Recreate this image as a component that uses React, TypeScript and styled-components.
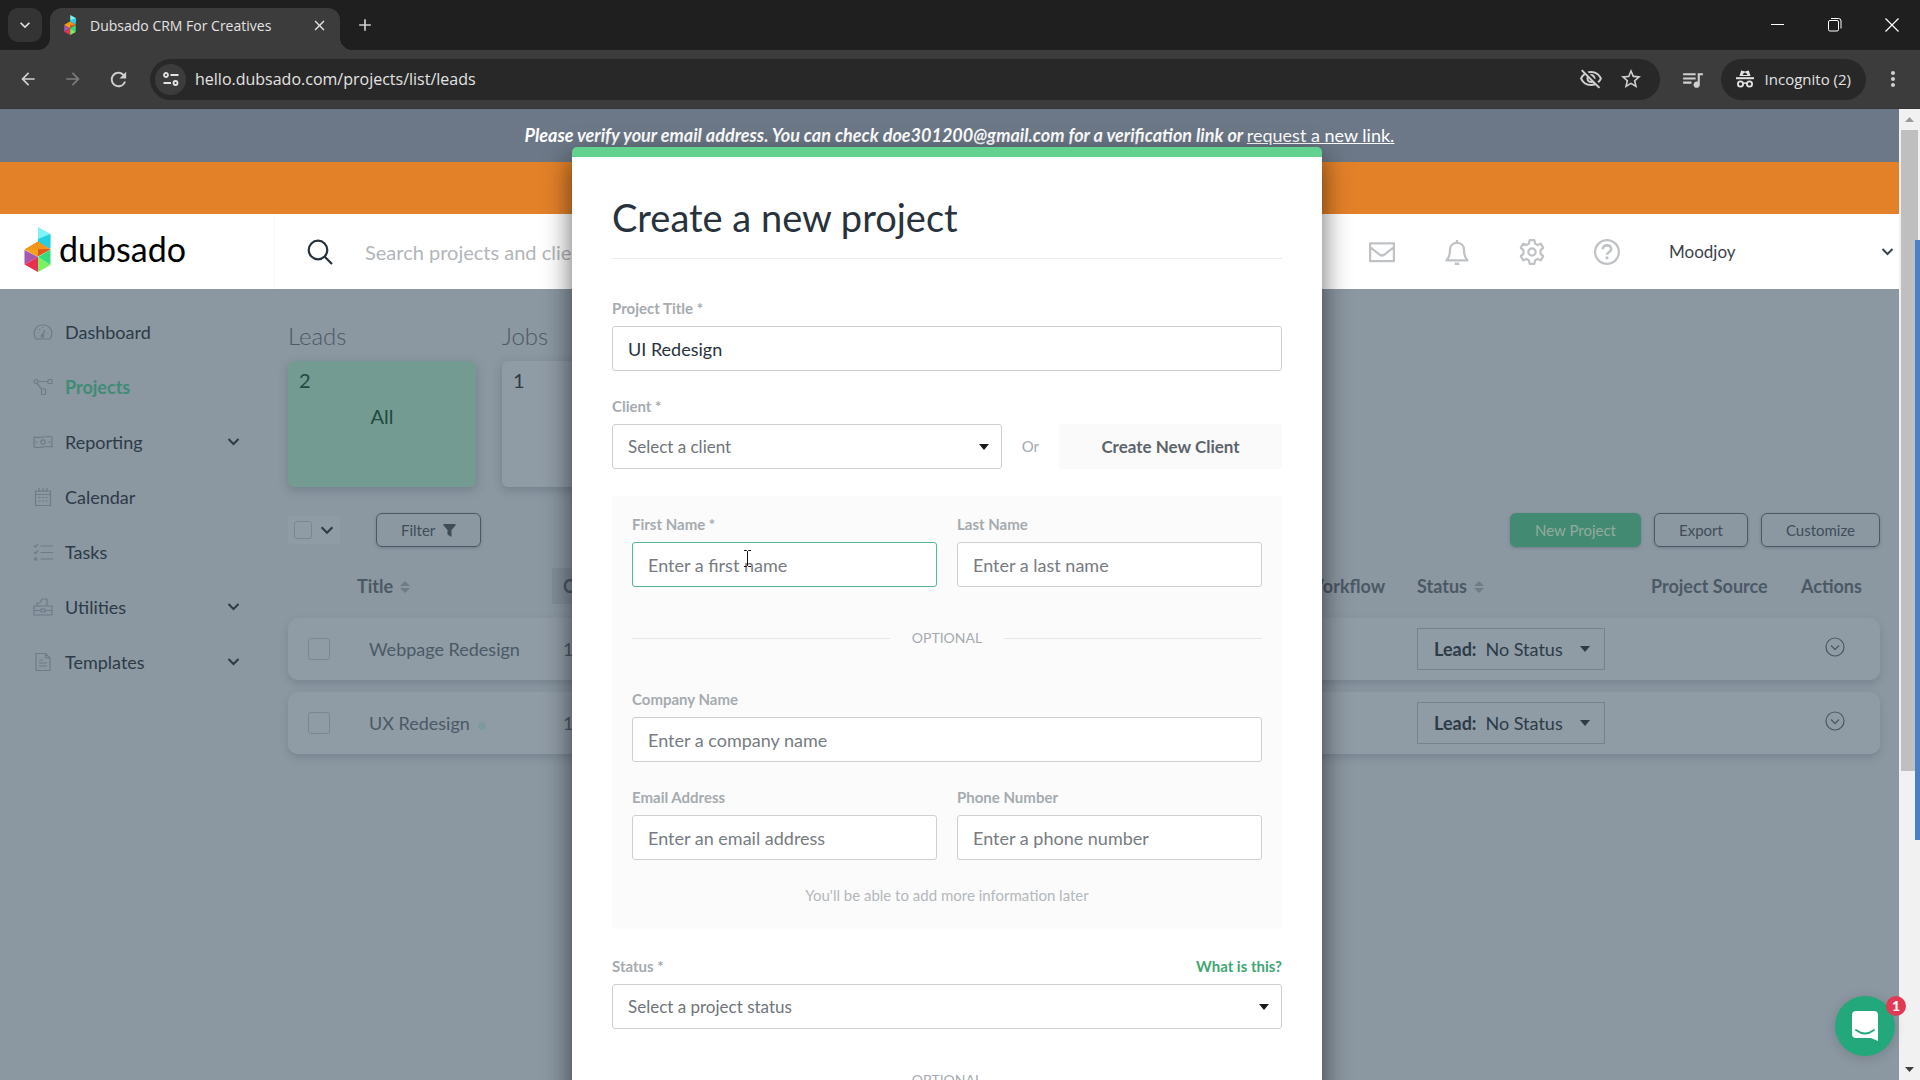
import React from "react";
import styled, { createGlobalStyle, css } from "styled-components";
import {
  MdArrowBack,
  MdArrowForward,
  MdRefresh,
  MdOutlineVisibilityOff,
  MdStarBorder,
  MdQueueMusic,
  MdMoreVert,
  MdAdd,
  MdClose,
  MdKeyboardArrowDown,
} from "react-icons/md";

const sans = `Lato, "Open Sans", sans-serif`;
const chromeSans = `"Open Sans", "Noto Sans", sans-serif`;

const color = {
  frame: "#1f1f1f",
  toolbar: "#3c3c3c",
  field: "#282828",
  chromeText: "#e3e3e3",
  page: "#8b97a1",
  row: "#8f9ba5",
  ink: "#2d3b47",
  muted: "#4b5965",
  faint: "#6f7c88",
  label: "#a5abb0",
  border: "#cdd0d2",
  heading: "#27323c",
};

const GlobalStyle = createGlobalStyle`
  *, *::before, *::after { box-sizing: border-box; }
  body { margin: 0; font-family: ${sans}; }
  button, input, select { font: inherit; color: inherit; }
  button { background: none; border: 0; padding: 0; cursor: pointer; }
  ul { list-style: none; margin: 0; padding: 0; }
`;

const Screen = styled.div`
  display: flex;
  flex-direction: column;
  height: 100vh;
  overflow: hidden;
  background: ${color.frame};
`;

/* ---------- Browser frame ---------- */

const TabStrip = styled.div`
  display: flex;
  flex: none;
  align-items: flex-end;
  height: 50px;
  padding-left: 8px;
  color: ${color.chromeText};
  font-family: ${chromeSans};
`;

const TabSearch = styled.button`
  display: flex;
  align-items: center;
  justify-content: center;
  width: 34px;
  height: 34px;
  margin: 0 8px 8px 0;
  border-radius: 10px;
  background: #343434;
  font-size: 20px;
`;

const Tab = styled.div`
  position: relative;
  display: flex;
  align-items: center;
  width: 290px;
  height: 42px;
  padding: 0 12px 8px 13px;
  border-radius: 12px 12px 0 0;
  background: ${color.toolbar};
  font-size: 14px;

  &::before,
  &::after {
    content: "";
    position: absolute;
    bottom: 0;
    width: 12px;
    height: 12px;
  }
  &::before {
    left: -12px;
    background: radial-gradient(circle at 0 0, transparent 12px, ${color.toolbar} 12px);
  }
  &::after {
    right: -12px;
    background: radial-gradient(circle at 100% 0, transparent 12px, ${color.toolbar} 12px);
  }
`;

const TabTitle = styled.span`
  flex: 1;
  margin-left: 13px;
  white-space: nowrap;
`;

const ChromeButton = styled.button<{ $dim?: boolean; $size?: number }>`
  display: flex;
  align-items: center;
  justify-content: center;
  flex: none;
  width: ${(p) => p.$size ?? 24}px;
  height: 34px;
  font-size: 20px;
  color: ${(p) => (p.$dim ? "#7c7c7c" : "#d0d0d0")};
`;

const NewTab = styled(ChromeButton)`
  margin: 0 auto 8px 12px;
  width: 26px;
`;

const WindowButton = styled.button`
  display: flex;
  align-items: center;
  justify-content: center;
  width: 57px;
  height: 50px;
`;

const Toolbar = styled.div`
  display: flex;
  flex: none;
  align-items: center;
  height: 59px;
  padding: 0 15px 0 16px;
  border-bottom: 1px solid #353535;
  background: ${color.toolbar};
  color: ${color.chromeText};
  font-family: ${chromeSans};
`;

const NavButtons = styled.div`
  display: flex;
  gap: 21px;
  margin-right: 20px;
`;

const AddressBar = styled.div`
  display: flex;
  flex: 1;
  align-items: center;
  height: 41px;
  margin-right: 8px;
  padding: 0 17px 0 5px;
  border-radius: 21px;
  background: ${color.field};
`;

const SiteInfo = styled.button`
  display: flex;
  align-items: center;
  justify-content: center;
  width: 31px;
  height: 31px;
  border-radius: 50%;
  background: #3c3c3c;
`;

const Address = styled.input`
  flex: 1;
  min-width: 0;
  height: 32px;
  padding: 0 9px;
  border: 0;
  outline: 0;
  background: none;
  font-size: 16px;
`;

const Incognito = styled.button`
  display: flex;
  align-items: center;
  gap: 11px;
  height: 41px;
  margin: 0 15px 0 3px;
  padding: 0 15px;
  border-radius: 21px;
  background: ${color.field};
  font-size: 15px;
  white-space: nowrap;
`;

const Window = styled.div`
  position: relative;
  display: flex;
  flex: 1;
  min-height: 0;
`;

const Viewport = styled.div`
  position: relative;
  display: flex;
  flex: 1;
  flex-direction: column;
  min-width: 0;
  overflow: hidden;
  background: ${color.page};
`;

const Scrollbar = styled.div`
  display: flex;
  flex: none;
  flex-direction: column;
  width: 21px;
  padding: 0 2px;
  background: #f1f1f1;
`;

const ScrollArrow = styled.span<{ $down?: boolean }>`
  display: flex;
  align-items: center;
  justify-content: center;
  height: 21px;
  color: ${(p) => (p.$down ? "#404040" : "#9a9a9a")};
  transform: ${(p) => (p.$down ? "rotate(180deg)" : "none")};
`;

const ScrollTrack = styled.div`
  flex: 1;
`;

const ScrollThumb = styled.div`
  height: 69%;
  background: #bfbfbf;
`;

const ScreenEdge = styled.div`
  position: absolute;
  top: 131px;
  right: 0;
  width: 5px;
  height: 600px;
  background: #4a80c4;
`;

/* ---------- Page header ---------- */

const Notice = styled.p`
  flex: none;
  height: 53px;
  margin: 0;
  padding: 0 0 0 20px;
  background: #6c7887;
  color: #fff;
  font-size: 18px;
  font-weight: 700;
  font-style: italic;
  line-height: 52px;
  text-align: center;

  a {
    color: inherit;
    font-style: normal;
    font-weight: 400;
  }
`;

const TrialBar = styled.div`
  flex: none;
  height: 52px;
  background: #e38129;
`;

const Header = styled.header`
  display: flex;
  flex: none;
  align-items: center;
  height: 75px;
  background: #fff;
  color: #3b434b;
`;

const Brand = styled.a`
  display: flex;
  align-items: center;
  gap: 8px;
  width: 275px;
  height: 100%;
  padding: 0 0 5px 24px;
  border-right: 1px solid #f8f8f8;
  color: #000;
  font-size: 34px;
  line-height: 40px;
  text-decoration: none;
`;

const Search = styled.label`
  display: flex;
  flex: 1;
  align-items: center;
  gap: 32px;
  padding-left: 32px;
`;

const SearchInput = styled.input`
  flex: 1;
  border: 0;
  outline: 0;
  background: none;
  padding: 0;
  font-size: 20px;

  &::placeholder {
    color: #b2b6ba;
    opacity: 1;
  }
`;

const HeaderIcons = styled.div`
  display: flex;
  gap: 47px;
  margin-right: 48px;
`;

const HeaderIcon = styled.button`
  display: flex;
  width: 28px;
  height: 28px;
  color: #bfc3c6;
`;

const Account = styled.button`
  display: flex;
  align-items: center;
  justify-content: space-between;
  width: 225px;
  margin-right: 5px;
  font-size: 17px;
`;

/* ---------- Page body ---------- */

const Body = styled.div`
  display: flex;
  flex: 1;
  min-height: 0;
`;

const Sidebar = styled.nav`
  flex: none;
  width: 288px;
  padding: 15px 48px 0 33px;
`;

const NavItem = styled.a<{ $active?: boolean }>`
  display: flex;
  align-items: center;
  gap: 12px;
  height: 55px;
  color: ${(p) => (p.$active ? "#3f8c76" : color.ink)};
  font-size: 18px;
  font-weight: ${(p) => (p.$active ? 700 : 400)};
  text-decoration: none;

  svg:first-child {
    color: ${color.faint};
  }
  svg:nth-child(3) {
    margin-left: auto;
  }
`;

const Main = styled.main`
  flex: 1;
  min-width: 0;
  padding: 32px 19px 0 0;
`;

const Groups = styled.div`
  display: flex;
  gap: 26px;
`;

const Group = styled.section`
  width: 188px;
`;

const GroupTitle = styled.h2`
  margin: 0 0 10px;
  color: ${color.muted};
  font-size: 24px;
  font-weight: 300;
  line-height: 30px;
`;

const GroupCard = styled.button<{ $active?: boolean }>`
  display: flex;
  flex-direction: column;
  width: 100%;
  height: 126px;
  padding: 5px 11px;
  border-radius: 6px;
  background: ${(p) => (p.$active ? "#739b92" : color.row)};
  box-shadow: 0 3px 10px rgba(60, 75, 90, 0.3);
  color: ${(p) => (p.$active ? "#1f4a40" : color.ink)};
  font-size: 20px;
  line-height: 28px;
  text-align: left;
`;

const GroupName = styled.span`
  align-self: center;
  margin-top: 8px;
`;

const Actions = styled.div`
  display: flex;
  align-items: center;
  gap: 13px;
  height: 34px;
  margin-top: 26px;
`;

const SelectAll = styled.label`
  display: flex;
  align-items: center;
  gap: 8px;
  height: 28px;
  margin-right: 23px;
  padding: 0 6px;
  background: ${color.row};
  color: ${color.ink};
`;

const CheckBox = styled.input<{ $size: number }>`
  appearance: none;
  display: block;
  width: ${(p) => p.$size}px;
  height: ${(p) => p.$size}px;
  margin: 0;
  border: 1px solid #7a8792;
  border-radius: 3px;
`;

const OutlineButton = styled.button<{ $primary?: boolean }>`
  display: flex;
  align-items: center;
  gap: 8px;
  height: 34px;
  padding: 0 24px;
  border: 1px solid ${(p) => (p.$primary ? "#438a72" : "#4b5965")};
  border-radius: 6px;
  background: ${(p) => (p.$primary ? "#438a72" : "transparent")};
  box-shadow: 0 1px 3px rgba(60, 75, 90, 0.35);
  color: ${(p) => (p.$primary ? "#93ab9f" : "#3f4d59")};
  font-size: 15px;
  white-space: nowrap;
`;

const Spacer = styled.span`
  flex: 1;
`;

const ProjectTable = styled.table`
  width: 100%;
  margin-top: 21px;
  border-collapse: separate;
  border-spacing: 0;
  table-layout: fixed;
  color: ${color.muted};
  font-size: 18px;
`;

const Col = styled.col<{ $w?: number }>`
  width: ${(p) => (p.$w ? `${p.$w}px` : "auto")};
`;

const HeadCell = styled.th<{ $sorted?: boolean }>`
  height: 36px;
  padding: 0 11px;
  background: ${(p) => (p.$sorted ? "#828e98" : "transparent")};
  text-align: left;
  font-weight: 700;
  white-space: nowrap;

  svg {
    margin-left: 7px;
  }
`;

const Gap = styled.td<{ $h: number }>`
  height: ${(p) => p.$h}px;
  padding: 0;
`;

const Row = styled.tr`
  border-radius: 10px;
  box-shadow: 0 4px 7px rgba(75, 90, 103, 0.26);

  td:first-child {
    padding-left: 20px;
    border-radius: 10px 0 0 10px;
  }
  td:last-child {
    border-radius: 0 10px 10px 0;
  }
`;

const Cell = styled.td<{ $center?: boolean; $indent?: boolean }>`
  height: 62px;
  padding: 0 11px;
  padding-left: ${(p) => (p.$indent ? 23 : 11)}px;
  background: ${color.row};
  text-align: ${(p) => (p.$center ? "center" : "left")};
  white-space: nowrap;
`;

const StatusButton = styled.button`
  display: flex;
  align-items: center;
  gap: 9px;
  height: 42px;
  width: 188px;
  padding: 0 14px 0 16px;
  border: 1px solid #76838e;
  color: ${color.ink};
  font-size: 18px;

  svg {
    margin-left: auto;
  }
`;

const RowAction = styled.button`
  width: 20px;
  height: 20px;
  color: ${color.muted};
`;

const UnreadDot = styled.i`
  display: inline-block;
  width: 8px;
  height: 8px;
  margin-left: 8px;
  border-radius: 50%;
  background: #7e9a9c;
`;

/* ---------- Dialog ---------- */

const Overlay = styled.div`
  position: absolute;
  inset: 0;
  display: flex;
  align-items: flex-start;
  justify-content: center;
  padding: 38px 5px 0 0;
  overflow: hidden;
`;

const Dialog = styled.form`
  width: 750px;
  padding: 36px 40px 120px;
  border-top: 10px solid #63d28f;
  border-radius: 5px;
  background: #fff;
  box-shadow: 0 10px 28px rgba(0, 0, 0, 0.6);
`;

const DialogTitle = styled.h1`
  margin: 0 0 39px;
  padding-bottom: 17px;
  border-bottom: 1px solid #ececec;
  color: ${color.heading};
  font-size: 38px;
  font-weight: 400;
  line-height: 48px;
`;

const Field = styled.div`
  display: flex;
  flex: 1;
  flex-direction: column;
  gap: 8px;
  min-width: 0;
`;

const Stack = styled.div`
  display: flex;
  flex-direction: column;
  gap: 25px;
`;

const FieldRow = styled.div`
  display: flex;
  align-items: flex-end;
  gap: 20px;
`;

const LabelRow = styled.div`
  display: flex;
  justify-content: space-between;
`;

const Label = styled.label`
  color: ${color.label};
  font-size: 15px;
  font-weight: 700;
  line-height: 20px;
`;

const HelpLink = styled.a`
  color: #3fa673;
  font-size: 15px;
  font-weight: 700;
  line-height: 20px;
  text-decoration: none;
`;

const box = css`
  width: 100%;
  height: 45px;
  padding: 0 15px;
  border: 1px solid ${color.border};
  border-radius: 3px;
  outline: 0;
  background: #fff;
`;

const TextBox = styled.input<{ $focused?: boolean }>`
  ${box}
  border-color: ${(p) => (p.$focused ? "#55b893" : color.border)};
  color: ${color.heading};
  font-size: 18px;

  &::placeholder {
    color: #777c81;
    opacity: 1;
  }
`;

const SelectBox = styled.span`
  display: grid;
  align-items: center;

  select,
  svg {
    grid-area: 1 / 1;
  }
  svg {
    justify-self: end;
    margin-right: 13px;
    pointer-events: none;
  }
`;

const Select = styled.select`
  ${box}
  appearance: none;
  color: #6f757a;
  font-size: 17px;
`;

const Or = styled.span`
  color: ${color.label};
  font-size: 15px;
  line-height: 45px;
`;

const NewClient = styled.button`
  width: 223px;
  height: 45px;
  border-radius: 3px;
  background: #fafafa;
  color: #5c646b;
  font-size: 17px;
  font-weight: 700;
`;

const Panel = styled.fieldset`
  margin: 27px 0;
  padding: 18px 20px 24px;
  border: 0;
  background: #fbfbfb;
`;

const Divider = styled.div`
  display: flex;
  align-items: center;
  gap: 22px;
  margin: 41px 0;
  color: ${color.label};
  font-size: 14px;
  line-height: 20px;

  &::before,
  &::after {
    content: "";
    flex: 1;
    height: 1px;
    background: #e4e6e7;
  }
`;

const Note = styled.p`
  margin: 0;
  color: #b3b8bc;
  font-size: 15px;
  line-height: 20px;
  text-align: center;
`;

const PointerArea = styled.span`
  position: relative;
  display: block;

  svg {
    position: absolute;
    top: 8px;
    left: 111px;
    pointer-events: none;
  }
`;

const Chat = styled.button`
  position: absolute;
  right: 25px;
  bottom: 24px;
  display: flex;
  align-items: center;
  justify-content: center;
  width: 60px;
  height: 60px;
  border-radius: 50%;
  background: #22a87b;
  box-shadow: 0 2px 12px rgba(0, 0, 0, 0.15);
`;

const ChatBadge = styled.span`
  position: absolute;
  top: 0;
  right: -11px;
  width: 20px;
  height: 20px;
  border-radius: 50%;
  background: #e23a55;
  color: #fff;
  font-size: 14px;
  font-weight: 900;
  line-height: 20px;
  text-align: center;
`;

/* ---------- Drawings ---------- */

const Mark = ({ w, h }: { w: number; h: number }) => (
  <svg width={w} height={h} viewBox="0 0 26 45" aria-hidden="true">
    <path d="M13.500 0 26 7v9l-12.500-4z" fill="#7ff3f5" />
    <path d="M13.500 12 26 7v15l-12.500-7z" fill="#25cfe0" />
    <path d="M0 22.500 13.500 14.500V30z" fill="#f5a318" />
    <path d="M13.500 14.500 26 22.500l-12.500 7z" fill="#e2561f" />
    <path d="M0 22.500 13.500 14.500 25 22z" fill="#f0961a" />
    <path d="M0 23l13.500 7L0 37.500z" fill="#a757b0" />
    <path d="M13.500 30v15L0 37.500z" fill="#e8304f" />
    <path d="M13.500 30 26 22.500V38z" fill="#35dc7c" />
    <path d="M13.500 30 26 38l-12.500 7z" fill="#7cf060" />
  </svg>
);

const Chevron = ({ size = 13 }: { size?: number }) => (
  <svg width={size} height={size} viewBox="0 0 13 13" fill="none" stroke="currentColor" strokeWidth="2" aria-hidden="true">
    <path d="M1.500 4 6.500 9l5-5" />
  </svg>
);

const Caret = ({ fill = "#15191c" }: { fill?: string }) => (
  <svg width="10" height="6" viewBox="0 0 10 6" fill={fill} aria-hidden="true">
    <path d="M0 0h10L5 6z" />
  </svg>
);

const SortIcon = () => (
  <svg width="10" height="12" viewBox="0 0 10 12" fill={color.faint} aria-hidden="true">
    <path d="M5 0l5 5H0zM0 7h10l-5 5z" />
  </svg>
);

const IncognitoIcon = () => (
  <svg width="18" height="18" viewBox="0 0 18 18" fill="none" stroke="currentColor" aria-hidden="true">
    <path d="M5.200 0.500 9 1.500 12.800 0.500 14.500 6h-11z" fill="currentColor" stroke="none" />
    <path d="M8 2.800h2L11.500 5h-5z" fill={color.field} stroke="none" />
    <path d="M0 8.200h18" strokeWidth="2" />
    <circle cx="4.500" cy="14" r="2.600" strokeWidth="1.800" />
    <circle cx="13.500" cy="14" r="2.600" strokeWidth="1.800" />
    <path d="M7 13.500q2-1 4 0" strokeWidth="1.600" />
  </svg>
);

const TuneIcon = () => (
  <svg width="16" height="14" viewBox="0 0 16 14" fill="none" stroke="currentColor" strokeWidth="1.800" aria-hidden="true">
    <circle cx="3" cy="3" r="2" />
    <path d="M7.500 3H15.500M0.500 11H8" />
    <circle cx="12.500" cy="11" r="2" />
  </svg>
);

const Line = ({ size, w = 1.4, children }: { size: number; w?: number; children: React.ReactNode }) => (
  <svg
    width={size}
    height={size}
    viewBox="0 0 20 20"
    fill="none"
    stroke="currentColor"
    strokeWidth={w}
    strokeLinejoin="round"
    aria-hidden="true"
  >
    {children}
  </svg>
);

const navIcons: Record<string, React.ReactNode> = {
  Dashboard: (
    <>
      <path d="M3 17C-1 11 2 3 10 3s11 8 7 14z" />
      <path d="M4.500 11h1M6 7l1 1M14.500 11h1M10 5v1" />
      <path d="M9 14l3-6" />
      <circle cx="9.500" cy="14" r="1.300" />
    </>
  ),
  Projects: (
    <>
      <circle cx="3" cy="4.500" r="2" />
      <path d="M15 2.500h4v4h-4zM5 4.500h10M4 6.500l5 6M8.500 12h4v5.500h-4z" />
    </>
  ),
  Reporting: (
    <>
      <path d="M1 5c6 2 12-2 18 0v10c-6-2-12 2-18 0z" />
      <circle cx="10" cy="10" r="2.200" />
      <path d="M3.500 9v2M16.500 9v2" />
    </>
  ),
  Calendar: (
    <>
      <path d="M2.500 4h15v14.500h-15zM2.500 7.500h15M6 1v4M10 1v4M14 1v4" />
      <path d="M5.500 10.500h2M9 10.500h2M12.500 10.500h2M5.500 14h2M9 14h2M12.500 14h2" />
    </>
  ),
  Tasks: (
    <path d="M7.500 4H20M7.500 10.500H20M7.500 17H20M1 3.500l1.500 1.500L5 2M1 10l1.500 1.500L5 8.500M1.500 16h2v2h-2z" />
  ),
  Utilities: (
    <path d="M1 9h18v9H1zM1 13.500h7M12 13.500h7M8 12h4v3H8zM4 9V6h3l2-4h5v7" />
  ),
  Templates: (
    <path d="M3 1.500h9.500L17 6v12.500H3zM12.500 1.500V6H17M6 8h4M6 11h8M6 14h8" />
  ),
};

const nav = [
  { name: "Dashboard" },
  { name: "Projects" },
  { name: "Reporting", menu: true },
  { name: "Calendar" },
  { name: "Tasks" },
  { name: "Utilities", menu: true },
  { name: "Templates", menu: true },
];

const projects = [
  { title: "Webpage Redesign", created: "10/23", unread: false },
  { title: "UX Redesign", created: "10/23", unread: true },
];

/* ---------- Form parts ---------- */

const TextField = ({
  id,
  label,
  placeholder,
  value,
}: {
  id: string;
  label: string;
  placeholder?: string;
  value?: string;
}) => (
  <Field>
    <Label htmlFor={id}>{label}</Label>
    <TextBox id={id} placeholder={placeholder} defaultValue={value} />
  </Field>
);

const DropDown = ({ id, text }: { id: string; text: string }) => (
  <SelectBox>
    <Select id={id}>
      <option>{text}</option>
    </Select>
    <Caret />
  </SelectBox>
);

const BrowserFrame = () => (
  <>
    <TabStrip>
      <TabSearch aria-label="Search tabs">
        <MdKeyboardArrowDown />
      </TabSearch>
      <Tab>
        <Mark w={14} h={20} />
        <TabTitle>Dubsado CRM For Creatives</TabTitle>
        <MdClose size={17} />
      </Tab>
      <NewTab aria-label="New tab">
        <MdAdd />
      </NewTab>
      <WindowButton aria-label="Minimize">
        <svg width="13" height="2" fill="#fff">
          <path d="M0 0h13v1H0z" />
        </svg>
      </WindowButton>
      <WindowButton aria-label="Restore">
        <svg width="14" height="14" viewBox="0 0 14 14" fill="none" stroke="#fff">
          <rect x="0.500" y="2.500" width="10" height="10.500" rx="1.500" />
          <path d="M3 0.500h7.500a2.500 2.500 0 0 1 2.500 2.500v7.500" />
        </svg>
      </WindowButton>
      <WindowButton aria-label="Close">
        <svg width="14" height="14" fill="none" stroke="#fff" strokeWidth="1.200">
          <path d="M0.500 0.500l13 13M13.500 0.500l-13 13" />
        </svg>
      </WindowButton>
    </TabStrip>
    <Toolbar>
      <NavButtons>
        <ChromeButton aria-label="Back">
          <MdArrowBack />
        </ChromeButton>
        <ChromeButton aria-label="Forward" $dim>
          <MdArrowForward />
        </ChromeButton>
        <ChromeButton aria-label="Reload">
          <MdRefresh size={23} />
        </ChromeButton>
      </NavButtons>
      <AddressBar>
        <SiteInfo aria-label="Site information">
          <TuneIcon />
        </SiteInfo>
        <Address aria-label="Address" defaultValue="hello.dubsado.com/projects/list/leads" />
        <ChromeButton aria-label="Third-party cookies blocked" $size={56}>
          <MdOutlineVisibilityOff size={24} />
        </ChromeButton>
        <ChromeButton aria-label="Bookmark">
          <MdStarBorder size={24} />
        </ChromeButton>
      </AddressBar>
      <ChromeButton aria-label="Media controls" $size={50}>
        <MdQueueMusic size={25} />
      </ChromeButton>
      <Incognito>
        <IncognitoIcon />
        Incognito (2)
      </Incognito>
      <ChromeButton aria-label="Menu">
        <MdMoreVert size={26} />
      </ChromeButton>
    </Toolbar>
  </>
);

const PageHeader = () => (
  <>
    <Notice>
      Please verify your email address. You can check doe301200@gmail.com for a verification link or{" "}
      <a href="#verify">request a new link.</a>
    </Notice>
    <TrialBar />
    <Header>
      <Brand href="#home">
        <Mark w={27} h={45} />
        dubsado
      </Brand>
      <Search>
        <svg width="26" height="26" viewBox="0 0 26 26" fill="none" stroke="#27323c" strokeWidth="2.200" aria-hidden="true">
          <circle cx="11" cy="11" r="9.300" />
          <path d="M17.500 17.500 25 25" />
        </svg>
        <SearchInput placeholder="Search projects and clients" />
      </Search>
      <HeaderIcons>
        <HeaderIcon aria-label="Mail">
          <Line size={28} w={1.6}>
            <path d="M1.500 3.800h17v12.700h-17zM1.500 6.500l7 5.500q1.500 1 3 0l7-5.500" />
          </Line>
        </HeaderIcon>
        <HeaderIcon aria-label="Notifications">
          <Line size={28} w={1.6}>
            <path d="M2.500 16h15c-2-2-2.500-4-2.500-7.500C15 5.500 13 3.500 10 3.500S5 5.500 5 8.500C5 12 4.500 14 2.500 16zM10 1.500v2M8.500 18q1.500 1 3 0" />
          </Line>
        </HeaderIcon>
        <HeaderIcon aria-label="Settings">
          <Line size={28} w={1.6}>
            <circle cx="10" cy="10" r="2.600" />
            <path d="M8.300 1.500h3.400l.5 2.500 1.700 1 2.400-.9 1.700 2.900-1.900 1.700v2.600l1.900 1.700-1.700 2.900-2.400-.9-1.700 1-.5 2.500H8.300L7.800 16l-1.700-1-2.400.9L2 13l1.900-1.700V8.700L2 7l1.700-2.900 2.400.9 1.700-1z" />
          </Line>
        </HeaderIcon>
        <HeaderIcon aria-label="Help">
          <Line size={28} w={1.6}>
            <circle cx="10" cy="10" r="8.500" />
            <path d="M7 8c0-3.600 6-3.600 6 0 0 2-3 2-3 4M10 13.300v1.800" strokeWidth="1.900" />
          </Line>
        </HeaderIcon>
      </HeaderIcons>
      <Account>
        Moodjoy
        <Chevron />
      </Account>
    </Header>
  </>
);

const ProjectList = () => (
  <Main>
    <Groups>
      <Group>
        <GroupTitle>Leads</GroupTitle>
        <GroupCard $active>
          2<GroupName>All</GroupName>
        </GroupCard>
      </Group>
      <Group>
        <GroupTitle>Jobs</GroupTitle>
        <GroupCard>1</GroupCard>
      </Group>
    </Groups>
    <Actions>
      <SelectAll>
        <CheckBox type="checkbox" $size={18} aria-label="Select all projects" />
        <Chevron size={14} />
      </SelectAll>
      <OutlineButton>
        Filter
        <svg width="13" height="13" viewBox="0 0 13 13" fill="currentColor" aria-hidden="true">
          <path d="M0.500 0h12v1.500L8.500 6v7l-4-2.500V6L0.500 1.500z" />
        </svg>
      </OutlineButton>
      <Spacer />
      <OutlineButton $primary>New Project</OutlineButton>
      <OutlineButton>Export</OutlineButton>
      <OutlineButton>Customize</OutlineButton>
    </Actions>
    <ProjectTable>
      <colgroup>
        <Col $w={58} />
        <Col $w={206} />
        <Col />
        <Col $w={112} />
        <Col $w={234} />
        <Col $w={150} />
        <Col $w={90} />
      </colgroup>
      <thead>
        <tr>
          <HeadCell />
          <HeadCell>
            Title
            <SortIcon />
          </HeadCell>
          <HeadCell $sorted>Created</HeadCell>
          <HeadCell>Workflow</HeadCell>
          <HeadCell>
            Status
            <SortIcon />
          </HeadCell>
          <HeadCell>Project Source</HeadCell>
          <HeadCell>Actions</HeadCell>
        </tr>
      </thead>
      <tbody>
        {projects.map((p, i) => (
          <React.Fragment key={p.title}>
            <tr aria-hidden="true">
              <Gap colSpan={7} $h={i ? 12 : 14} />
            </tr>
            <Row>
              <Cell>
                <CheckBox type="checkbox" $size={22} aria-label={`Select ${p.title}`} />
              </Cell>
              <Cell $indent>
                {p.title}
                {p.unread && <UnreadDot />}
              </Cell>
              <Cell>{p.created}</Cell>
              <Cell />
              <Cell>
                <StatusButton aria-haspopup="listbox">
                  <b>Lead:</b>No Status
                  <Caret fill={color.ink} />
                </StatusButton>
              </Cell>
              <Cell />
              <Cell $center>
                <RowAction aria-label={`Actions for ${p.title}`}>
                  <Line size={20} w={1.2}>
                    <circle cx="10" cy="10" r="9" />
                    <path d="M6 8.500l4 4 4-4" />
                  </Line>
                </RowAction>
              </Cell>
            </Row>
          </React.Fragment>
        ))}
      </tbody>
    </ProjectTable>
  </Main>
);

const CreateProject = () => (
  <Overlay>
    <Dialog role="dialog" aria-labelledby="dialog-title" onSubmit={(e) => e.preventDefault()}>
      <DialogTitle id="dialog-title">Create a new project</DialogTitle>
      <Stack>
        <TextField id="title" label="Project Title *" value="UI Redesign" />
        <FieldRow>
          <Field>
            <Label htmlFor="client">Client *</Label>
            <DropDown id="client" text="Select a client" />
          </Field>
          <Or>Or</Or>
          <NewClient type="button">Create New Client</NewClient>
        </FieldRow>
      </Stack>
      <Panel aria-label="New client">
        <FieldRow>
          <Field>
            <Label htmlFor="first">First Name *</Label>
            <PointerArea>
              <TextBox id="first" placeholder="Enter a first name" $focused />
              <svg width="9" height="17" viewBox="0 0 9 17" fill="none" stroke="#111" aria-hidden="true">
                <path d="M1 0.500h2.500l1 1 1-1H8M4.500 1.500v14M1 16.500h2.500l1-1 1 1H8" />
              </svg>
            </PointerArea>
          </Field>
          <TextField id="last" label="Last Name" placeholder="Enter a last name" />
        </FieldRow>
        <Divider>OPTIONAL</Divider>
        <Stack>
          <TextField id="company" label="Company Name" placeholder="Enter a company name" />
          <FieldRow>
            <TextField id="email" label="Email Address" placeholder="Enter an email address" />
            <TextField id="phone" label="Phone Number" placeholder="Enter a phone number" />
          </FieldRow>
          <Note>You'll be able to add more information later</Note>
        </Stack>
      </Panel>
      <Field>
        <LabelRow>
          <Label htmlFor="status">Status *</Label>
          <HelpLink href="#status-help">What is this?</HelpLink>
        </LabelRow>
        <DropDown id="status" text="Select a project status" />
      </Field>
      <Divider>OPTIONAL</Divider>
    </Dialog>
  </Overlay>
);

export default function App() {
  return (
    <Screen>
      <GlobalStyle />
      <BrowserFrame />
      <Window>
        <Viewport>
          <PageHeader />
          <Body>
            <Sidebar>
              {nav.map((item) => (
                <NavItem key={item.name} href={`#${item.name.toLowerCase()}`} $active={item.name === "Projects"}>
                  <Line size={20} w={1.2}>
                    {navIcons[item.name]}
                  </Line>
                  <span>{item.name}</span>
                  {item.menu && <Chevron />}
                </NavItem>
              ))}
            </Sidebar>
            <ProjectList />
          </Body>
          <CreateProject />
        </Viewport>
        <Scrollbar>
          <ScrollArrow>
            <svg width="9" height="5" fill="currentColor" aria-hidden="true">
              <path d="M4.500 0 9 5H0z" />
            </svg>
          </ScrollArrow>
          <ScrollTrack>
            <ScrollThumb />
          </ScrollTrack>
          <ScrollArrow $down>
            <svg width="9" height="5" fill="currentColor" aria-hidden="true">
              <path d="M4.500 0 9 5H0z" />
            </svg>
          </ScrollArrow>
        </Scrollbar>
        <ScreenEdge />
        <Chat aria-label="Open chat">
          <svg width="28" height="32" viewBox="0 0 28 32" aria-hidden="true">
            <path d="M5 1h18a4 4 0 0 1 4 4v26l-7-3H5a4 4 0 0 1-4-4V5a4 4 0 0 1 4-4z" fill="#fff" />
            <path d="M5 20q9 7 18 0" fill="none" stroke="#22a87b" strokeWidth="1.800" strokeLinecap="round" />
          </svg>
          <ChatBadge>1</ChatBadge>
        </Chat>
      </Window>
    </Screen>
  );
}
